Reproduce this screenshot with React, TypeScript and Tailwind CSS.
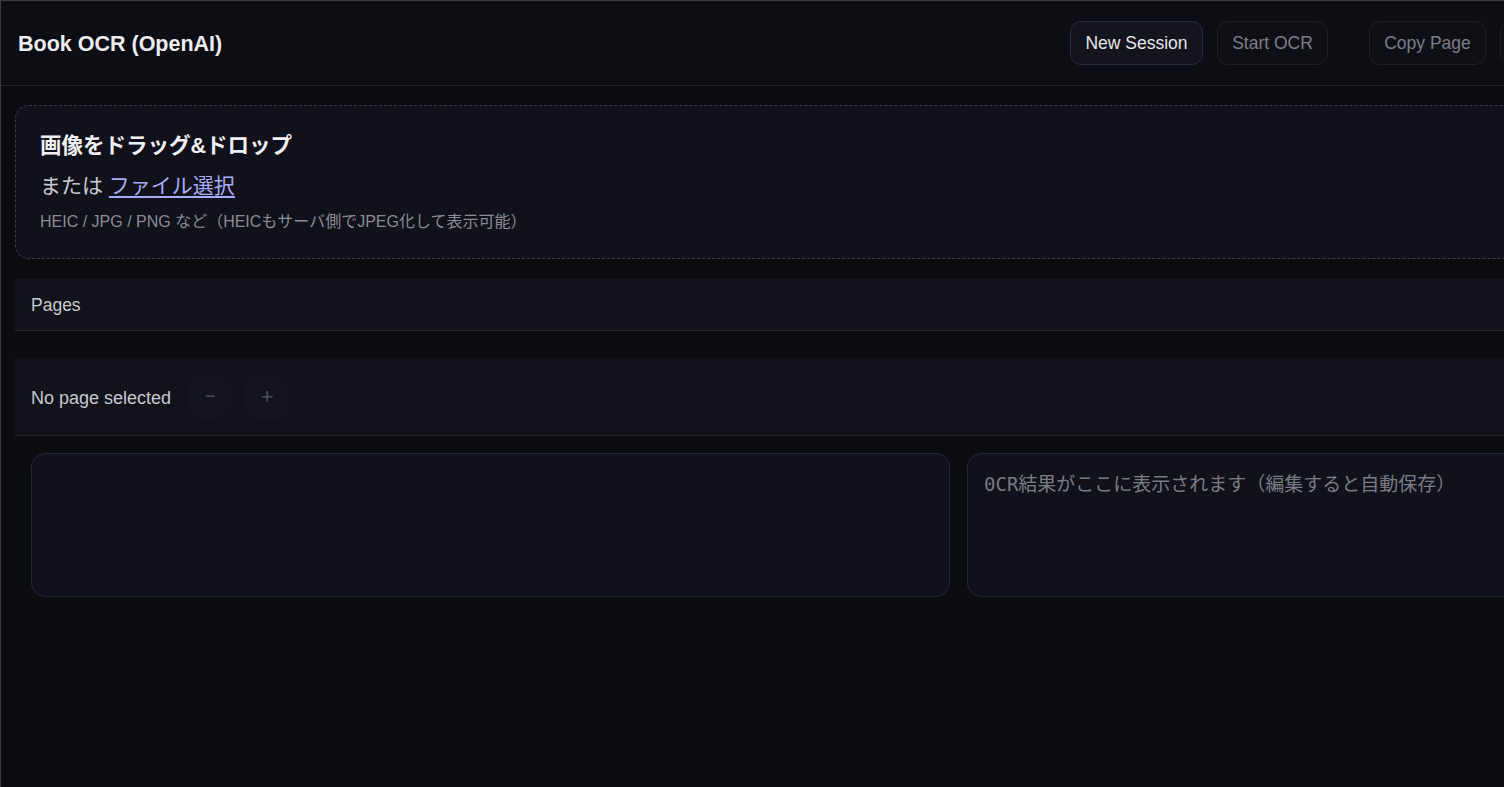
import React from "react";

const sans = "font-['Liberation_Sans','Noto_Sans_CJK_JP',sans-serif]";

function HeaderButton({ label, disabled, w }: { label: string; disabled?: boolean; w: string }) {
  return (
    <button
      className={`h-[44px] ${w} shrink-0 rounded-[11px] border text-[17.5px] ${
        disabled
          ? "border-[#1e1f29] bg-[#0f1016] text-[#7c7d86]"
          : "border-[#2a2b38] bg-[#13141d] text-[#e6e6ec]"
      }`}
    >
      {label}
    </button>
  );
}

export default function App() {
  return (
    <div className={`w-[1504px] h-[787px] overflow-hidden bg-[#0b0c10] border-t border-l border-[#3b3c43] ${sans}`}>
      <div className="w-[1915px]">
        <header className="h-[85px] border-b border-[#22232e] bg-[#0d0e14] flex items-center pl-[17px]">
          <h1 className="text-[21.5px] font-bold text-[#ececf0] w-[1052px] shrink-0 pt-[2px]">Book OCR (OpenAI)</h1>
          <div className="flex items-center gap-[14px]">
            <HeaderButton label="New Session" w="w-[133px]" />
            <HeaderButton label="Start OCR" w="w-[111px]" disabled />
            <div className="w-[13px]" />
            <HeaderButton label="Copy Page" w="w-[117px]" disabled />
            <HeaderButton label="" w="w-[110px]" disabled />
          </div>
        </header>

        <main className="px-[14px] pt-[19px]">
          <section className="h-[154px] rounded-[14px] border border-dashed border-[#3b3c4a] bg-[#10111a] pl-[24px] pt-[26px] flex flex-col">
            <div className="text-[21.5px] leading-[28px] font-bold text-[#f0f0f4]">画像をドラッグ&amp;ドロップ</div>
            <div className="mt-[12px] text-[21px] leading-[28px] text-[#c9c9d1]">
              または <a className="text-[#a9acf7] underline underline-offset-[3px]">ファイル選択</a>
            </div>
            <div className="mt-[12px] text-[16px] leading-[20px] text-[#8b8c96]">
              HEIC / JPG / PNG など（HEICもサーバ側でJPEG化して表示可能）
            </div>
          </section>

          <section className="mt-[20px] h-[52px] bg-[#11121a] border-b border-[#23242f] flex items-center pl-[16px] pt-[2px]">
            <span className="text-[17.5px] text-[#c8c8d0]">Pages</span>
          </section>

          <section className="mt-[27px] h-[78px] bg-[#11121a] border-b border-[#23242f] flex items-center pl-[16px] gap-[17px]">
            <span className="text-[18px] text-[#c8c8d0] pt-[3px]">No page selected</span>
            <div className="flex items-center gap-[13px]">
              <button className="w-[44px] h-[44px] rounded-[10px] bg-[#13141c] text-[#4a4b55] text-[18px] flex items-center justify-center">−</button>
              <button className="w-[44px] h-[44px] rounded-[10px] bg-[#13141c] text-[#4a4b55] text-[22px] flex items-center justify-center">+</button>
            </div>
          </section>

          <section className="px-[16px] pt-[17px] grid grid-cols-2 gap-[17px]">
            <div className="h-[144px] rounded-[14px] border border-[#252634] bg-[#10111a]" />
            <textarea
              className="h-[144px] rounded-[14px] border border-[#252634] bg-[#10111a] pl-[16px] pt-[17px] text-[19px] leading-[26px] text-[#d0d0d8] placeholder:text-[#7a7b85] resize-none outline-none font-['DejaVu_Sans_Mono','Noto_Sans_CJK_JP',monospace]"
              placeholder="0CR結果がここに表示されます（編集すると自動保存）"
            />
          </section>
        </main>
      </div>
    </div>
  );
}
